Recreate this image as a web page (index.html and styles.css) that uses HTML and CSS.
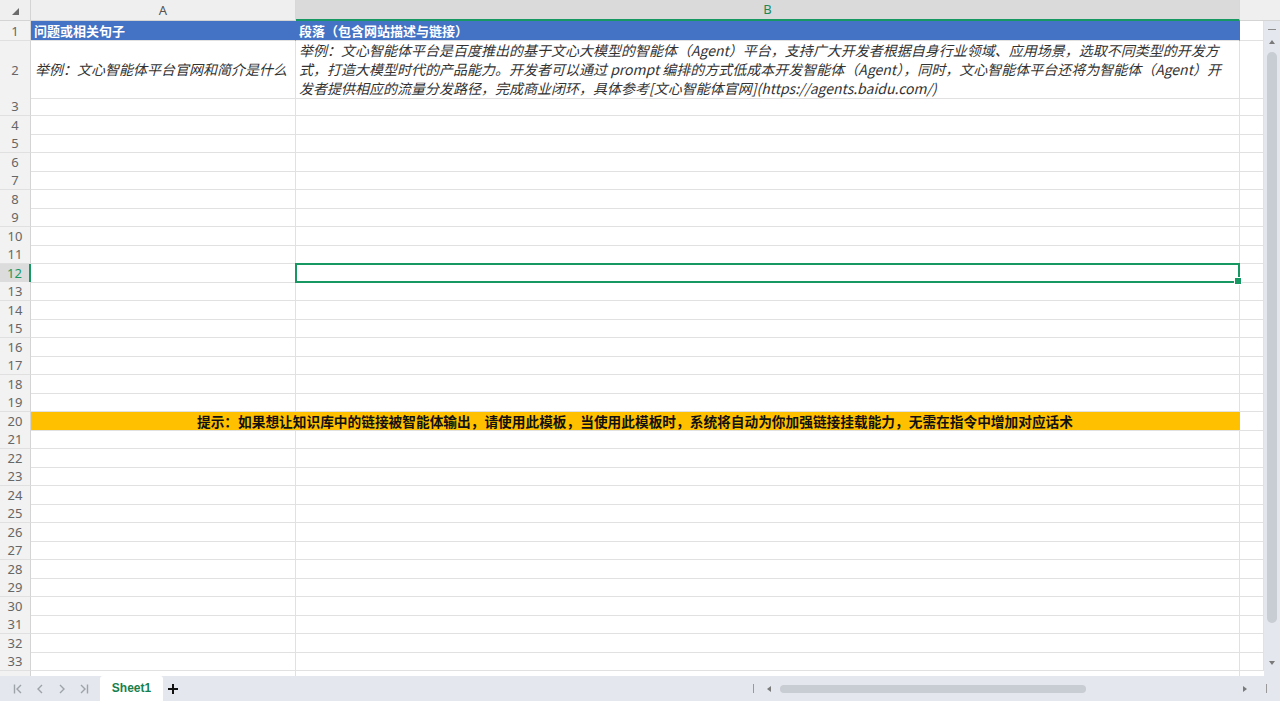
FILE: index.html
```html
<!DOCTYPE html>
<html lang="zh-CN">
  <head>
    <meta charset="UTF-8" />
    <meta name="viewport" content="width=device-width, initial-scale=1.0" />
    <title>Sheet1</title>
    <link rel="stylesheet" href="styles.css">
  </head>
  <body>
    <div class="book">
      <div class="sheet">
        <div class="col-heads">
          <div class="corner">
            <svg width="7" height="7" viewBox="0 0 7 7"><polygon points="7,0 7,7 0,7" fill="#6b6b6b" /></svg>
          </div>
          <div class="col-head">A</div>
          <div class="col-head active">B</div>
          <div class="col-head rest"></div>
        </div>

        <div class="body">
          <div class="grid" id="grid">
            <div class="row title-row">
              <div class="num">1</div>
              <div class="cell title">问题或相关句子</div>
              <div class="cell title">段落（包含网站描述与链接）</div>
              <div class="cell"></div>
            </div>
            <div class="row example-row">
              <div class="num">2</div>
              <div class="cell example">举例：文心智能体平台官网和简介是什么</div>
              <div class="cell example para">
                <span>举例：文心智能体平台是百度推出的基于文心大模型的智能体（Agent）平台，支持广大开发者根据自身行业领域、应用场景，选取不同类型的开发方</span>
                <span>式，打造大模型时代的产品能力。开发者可以通过 prompt 编排的方式低成本开发智能体（Agent），同时，文心智能体平台还将为智能体（Agent）开</span>
                <span>发者提供相应的流量分发路径，完成商业闭环，具体参考[文心智能体官网](https://agents.baidu.com/)</span>
              </div>
              <div class="cell"></div>
            </div>
          </div>

          <div class="vscroll">
            <div class="vs-cap"></div>
            <div class="arrow-up"></div>
            <div class="vs-thumb"></div>
            <div class="arrow-down"></div>
          </div>
        </div>
      </div>

      <div class="tabbar">
        <div class="nav">
          <svg width="10" height="10" viewBox="0 0 10 10"><path d="M1.5 0.5v9M8 1L4 5l4 4" /></svg>
          <svg width="10" height="10" viewBox="0 0 10 10"><path d="M7 1L3 5l4 4" /></svg>
          <svg width="10" height="10" viewBox="0 0 10 10"><path d="M3 1l4 4-4 4" /></svg>
          <svg width="10" height="10" viewBox="0 0 10 10"><path d="M2 1l4 4-4 4M8.5 0.5v9" /></svg>
        </div>
        <div class="sheet-tab">Sheet1</div>
        <svg class="add" width="10" height="10" viewBox="0 0 10 10"><path d="M5 0v10M0 5h10" /></svg>

        <div class="hscroll">
          <div class="edge"></div>
          <div class="arrow-left"></div>
          <div class="track"><div class="hs-thumb"></div></div>
          <div class="arrow-right"></div>
          <div class="edge"></div>
        </div>
      </div>
    </div>

    <script>
      const notice =
        "提示：如果想让知识库中的链接被智能体输出，请使用此模板，当使用此模板时，系统将自动为你加强链接挂载能力，无需在指令中增加对应话术";

      function populateRows() {
        const grid = document.getElementById("grid");
        for (let i = 3; i <= 33; i++) {
          const row = document.createElement("div");
          row.className = "row";
          if (i === 20) {
            row.innerHTML = `
              <div class="num">${i}</div>
              <div class="cell notice">${notice}</div>
              <div class="cell"></div>`;
          } else if (i === 12) {
            row.innerHTML = `
              <div class="num active">${i}</div>
              <div class="cell"></div>
              <div class="cell selected"></div>
              <div class="cell"></div>`;
          } else {
            row.innerHTML = `
              <div class="num">${i}</div>
              <div class="cell"></div>
              <div class="cell"></div>
              <div class="cell"></div>`;
          }
          grid.appendChild(row);
        }
      }

      populateRows();
    </script>
  </body>
</html>
```

FILE: styles.css
```css
* {
  box-sizing: border-box;
}
body {
  margin: 0;
  font-family: "Noto Sans CJK SC", sans-serif;
  color: #222;
  background: #fff;
}
.book {
  width: 1280px;
  height: 701px;
  display: flex;
  flex-direction: column;
  overflow: hidden;
}
.sheet {
  flex: 1;
  min-height: 0;
  display: flex;
  flex-direction: column;
}

/* column headers */
.col-heads {
  display: flex;
  height: 21px;
  flex-shrink: 0;
  background: #efefef;
}
.corner {
  width: 31px;
  border-right: 1px solid #d4d4d4;
  border-bottom: 1px solid #d4d4d4;
  display: flex;
  align-items: center;
  justify-content: center;
  padding-top: 2px;
}
.col-head {
  width: 265px;
  border-right: 1px solid #d8d8d8;
  border-bottom: 1px solid #d4d4d4;
  text-align: center;
  font: 13px/20px "Noto Sans", sans-serif;
  color: #555;
}
.col-head.active {
  width: 944px;
  background: #dadada;
  color: #1a8a58;
  line-height: 19px;
  border-bottom: 2px solid #179862;
}
.col-head.rest {
  flex: 1;
  border-right: 0;
  background: #efefef;
}

/* cells */
.body {
  flex: 1;
  min-height: 0;
  display: flex;
}
.grid {
  flex: 1;
  overflow: hidden;
  background: linear-gradient(to right, #f2f2f2 30px, #d4d4d4 30px 31px, #fff 31px 295px, #e1e1e1 295px 296px, #fff 296px 1239px, #e1e1e1 1239px 1240px, #fff 1240px);
}
.row {
  display: grid;
  grid-template-columns: 31px 265px 944px 1fr;
  height: 18.5px;
  background: #fff;
}
.num {
  display: flex;
  align-items: center;
  justify-content: center;
  background: #f2f2f2;
  border-right: 1px solid #d4d4d4;
  border-bottom: 1px solid #e0e0e0;
  font: 13px "Noto Sans", sans-serif;
  color: #666;
}
.num.active {
  background: #dcdcdc;
  color: #179862;
  border-right: 2px solid #179862;
}
.cell {
  border-right: 1px solid #e1e1e1;
  border-bottom: 1px solid #e1e1e1;
  overflow: hidden;
  white-space: nowrap;
}
.title-row {
  height: 20px;
}
.cell.title {
  background: #4472c4;
  border-right-color: #4472c4;
  color: #fff;
  font-weight: bold;
  font-size: 13px;
  line-height: 19px;
  padding-left: 3px;
}
.example-row {
  height: 56px;
}
.cell.example {
  display: flex;
  flex-direction: column;
  justify-content: center;
  overflow: visible;
  font-size: 14px;
  font-style: italic;
  line-height: 19px;
  color: #333;
  padding-left: 4px;
}
.cell.para {
  padding-left: 3px;
}
.cell.notice {
  grid-column: span 2;
  background: #ffc000;
  border-right-color: #ffc000;
  text-align: center;
  font-weight: bold;
  font-size: 13.7px;
  line-height: 18px;
  color: #111;
}
.cell.selected {
  position: relative;
  overflow: visible;
}
.cell.selected::after {
  content: "";
  position: absolute;
  top: -1px;
  left: -1px;
  right: -1px;
  bottom: -1px;
  border: 2px solid #179862;
}
.cell.selected::before {
  content: "";
  position: absolute;
  right: -3px;
  bottom: -3px;
  width: 6px;
  height: 6px;
  background: #179862;
  border: 1px solid #fff;
  z-index: 1;
}

/* vertical scrollbar */
.vscroll {
  width: 16px;
  background: #e4e7ed;
  display: flex;
  flex-direction: column;
  align-items: center;
  padding: 8px 0 11px;
}
.vs-cap {
  width: 8px;
  height: 1px;
  background: #8c8c8c;
}
.arrow-up {
  margin-top: 10px;
  border-left: 3px solid transparent;
  border-right: 3px solid transparent;
  border-bottom: 4px solid #7a7a7a;
}
.vs-thumb {
  flex: 1;
  width: 10px;
  margin: 8px 0 38px;
  border-radius: 5px;
  background: #c8ccd3;
}
.arrow-down {
  border-left: 3px solid transparent;
  border-right: 3px solid transparent;
  border-top: 4px solid #7a7a7a;
}

/* sheet tabs */
.tabbar {
  height: 25px;
  flex-shrink: 0;
  background: #e4e8ee;
  display: flex;
  align-items: center;
}
.nav {
  display: flex;
  gap: 12px;
  padding-left: 13px;
}
.nav svg path {
  fill: none;
  stroke: #9ea3a9;
  stroke-width: 1.4;
}
.sheet-tab {
  align-self: stretch;
  width: 63px;
  margin-left: 11px;
  background: #fff;
  border-radius: 3px 3px 0 0;
  text-align: center;
  font: bold 12px/25px "Liberation Sans", sans-serif;
  color: #17804c;
}
.add {
  margin-left: 5px;
}
.add path {
  stroke: #111;
  stroke-width: 2;
}
.hscroll {
  width: 514px;
  margin-left: auto;
  margin-right: 13px;
  display: flex;
  align-items: center;
}
.edge {
  width: 1px;
  height: 9px;
  background: #999;
}
.arrow-left {
  margin-left: 13px;
  border-top: 3px solid transparent;
  border-bottom: 3px solid transparent;
  border-right: 4px solid #7a7a7a;
}
.track {
  flex: 1;
  margin-left: 9px;
}
.hs-thumb {
  width: 306px;
  height: 8px;
  border-radius: 4px;
  background: #c8ccd3;
}
.arrow-right {
  margin-left: 5px;
  margin-right: 19px;
  border-top: 3px solid transparent;
  border-bottom: 3px solid transparent;
  border-left: 4px solid #7a7a7a;
}
```
